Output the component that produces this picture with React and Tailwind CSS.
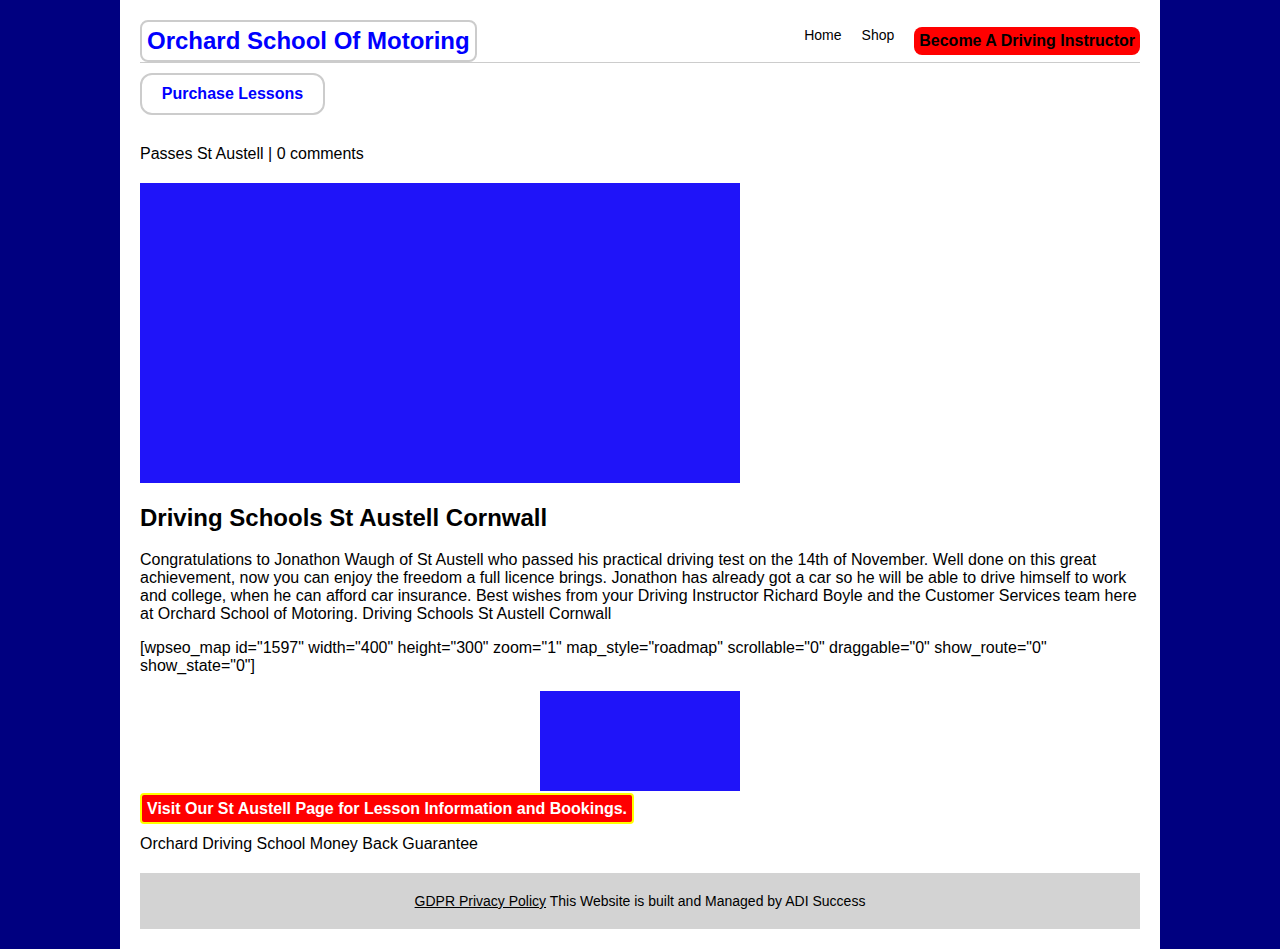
import React from 'react';

const App = () => {
  return (
    <div className="min-h-[949px] bg-[#000080] font-['Liberation_Sans',Arial,sans-serif] text-black">
      <div className="mx-auto w-[1040px] min-h-[949px] bg-white px-5 pt-5 pb-5">
        {/* Header */}
        <div className="flex items-start justify-between border-b border-[#cccccc]">
          <div className="rounded-lg border-2 border-[#cccccc] px-[5px] h-[42px] flex items-center text-[24px] font-bold text-[#0000ff] leading-none">
            Orchard School Of Motoring
          </div>
          <div className="flex items-start pt-[7px]">
            <a className="text-[14px] leading-[16px] mr-[20px]">Home</a>
            <a className="text-[14px] leading-[16px] mr-[20px]">Shop</a>
            <a className="rounded-lg bg-[#ff0000] px-[5px] h-[28px] flex items-center text-[16px] font-bold">
              Become A Driving Instructor
            </a>
          </div>
        </div>

        <div className="mt-[10px]">
          <button className="w-[185px] h-[42px] rounded-xl border-2 border-[#cccccc] text-[16px] font-bold text-[#0000ff]">
            Purchase Lessons
          </button>
        </div>

        <p className="mt-[30px] text-[16px] leading-[18px]">Passes St Austell | 0 comments</p>

        <div className="mt-[20px] h-[300px] w-[600px] bg-[#1f14f9]" />

        <h2 className="mt-[21px] text-[24px] font-bold leading-[28px]">Driving Schools St Austell Cornwall</h2>

        <p className="mt-[19px] text-[16px] leading-[18px]">
          Congratulations to Jonathon Waugh of St Austell who passed his practical driving test on the 14th of November. Well done on this great achievement, now you can enjoy the freedom a full licence brings. Jonathon has already got a car so he will be able to drive himself to work and college, when he can afford car insurance. Best wishes from your Driving Instructor Richard Boyle and the Customer Services team here at Orchard School of Motoring. Driving Schools St Austell Cornwall
        </p>

        <p className="mt-[16px] text-[16px] leading-[18px]">
          [wpseo_map id="1597" width="400" height="300" zoom="1" map_style="roadmap" scrollable="0" draggable="0" show_route="0" show_state="0"]
        </p>

        <div className="mt-[16px] flex justify-center">
          <div className="h-[100px] w-[200px] bg-[#1f14f9]" />
        </div>

        <div className="mt-[2px] flex">
          <a className="flex h-[31px] items-center rounded-[4px] border-2 border-[#ffff00] bg-[#ff0000] px-[5px] text-[16px] font-bold text-white">
            Visit Our St Austell Page for Lesson Information and Bookings.
          </a>
        </div>

        <p className="mt-[11px] text-[16px] leading-[18px]">Orchard Driving School Money Back Guarantee</p>

        <div className="mt-[20px] flex h-[56px] items-center justify-center bg-[#d3d3d3] pt-[1px] text-[14px]">
          <span><a className="underline">GDPR Privacy Policy</a> This Website is built and Managed by ADI Success</span>
        </div>
      </div>
    </div>
  );
};

export default App;
